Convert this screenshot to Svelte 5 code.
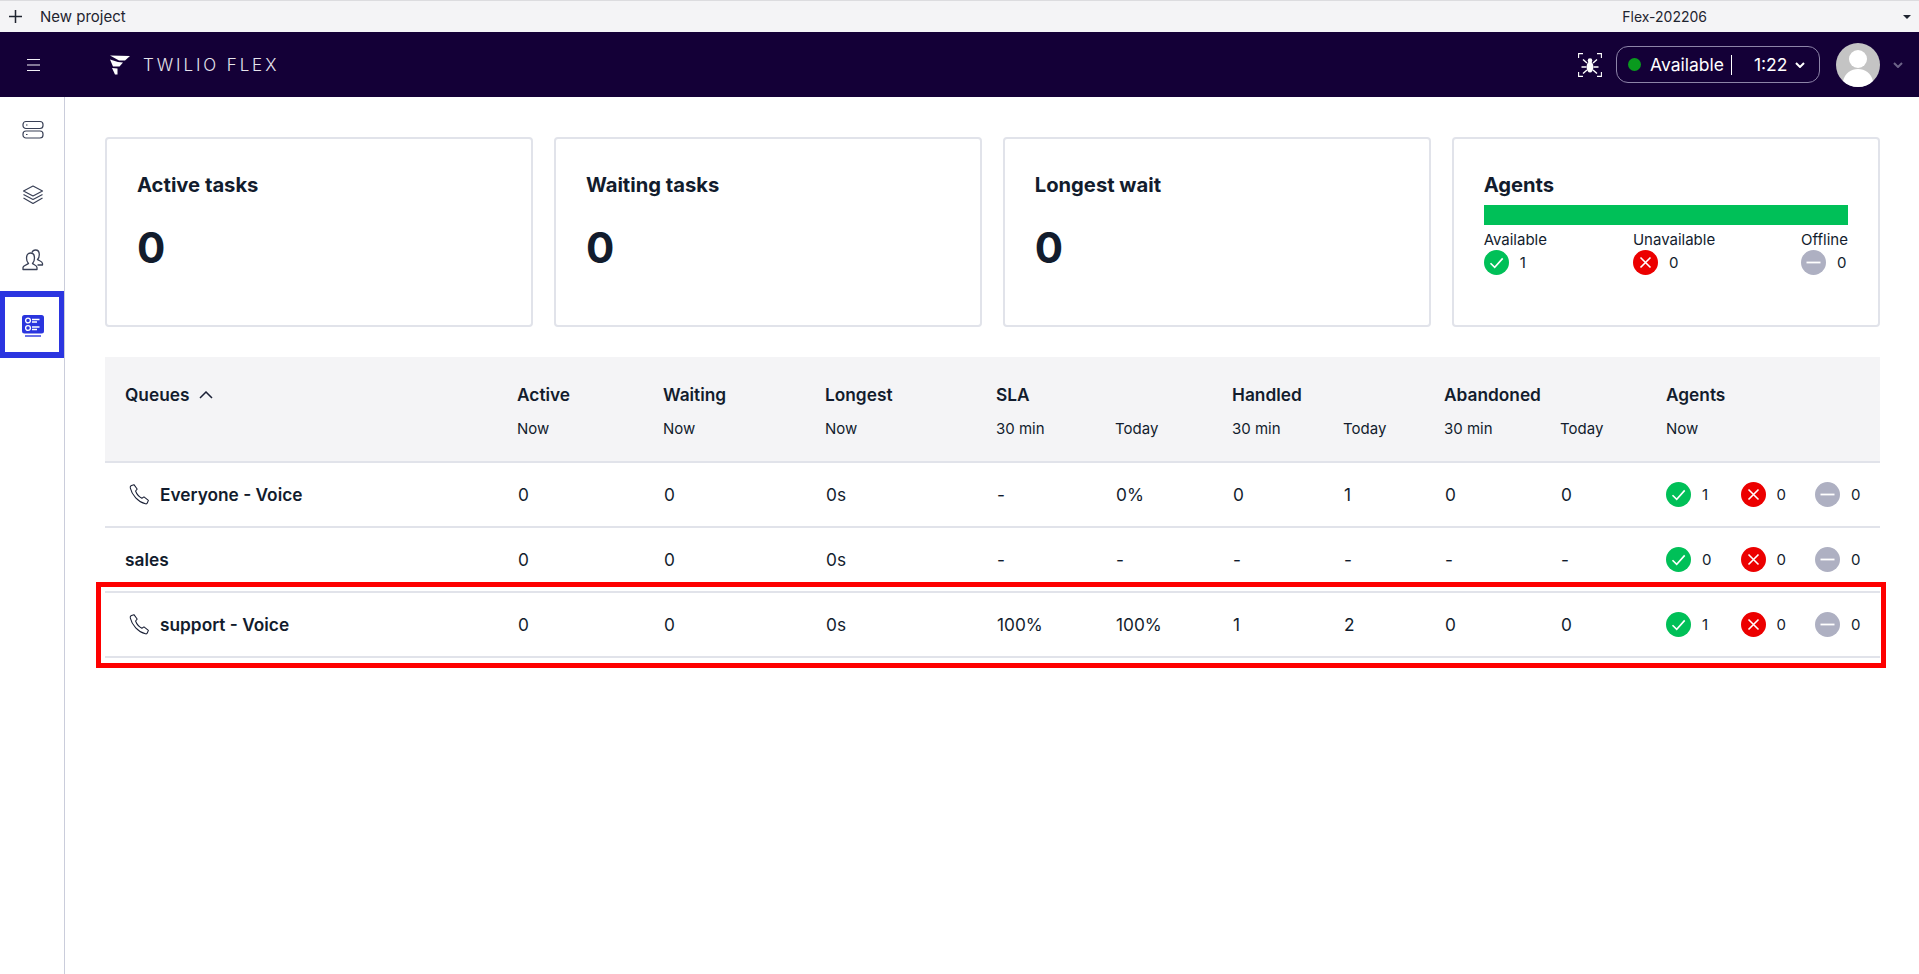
<script>
  const cards = ['Active tasks', 'Waiting tasks', 'Longest wait'];

  const columns = [
    { title: 'Active', sub: 'Now' },
    { title: 'Waiting', sub: 'Now' },
    { title: 'Longest', sub: 'Now' },
    { title: 'SLA', sub: '30 min' },
    { title: '', sub: 'Today' },
    { title: 'Handled', sub: '30 min' },
    { title: '', sub: 'Today' },
    { title: 'Abandoned', sub: '30 min' },
    { title: '', sub: 'Today' },
    { title: 'Agents', sub: 'Now' }
  ];

  const queues = [
    { name: 'Everyone - Voice', voice: true, values: ['0', '0', '0s', '-', '0%', '0', '1', '0', '0'], agents: [1, 0, 0] },
    { name: 'sales', voice: false, values: ['0', '0', '0s', '-', '-', '-', '-', '-', '-'], agents: [0, 0, 0] },
    { name: 'support - Voice', voice: true, values: ['0', '0', '0s', '100%', '100%', '1', '2', '0', '0'], agents: [1, 0, 0] }
  ];
</script>

{#snippet statusIcon(kind)}
  <svg class="status" viewBox="0 0 25 25">
    {#if kind === 'ok'}
      <circle cx="12.5" cy="12.5" r="12.5" fill="#00c058" />
      <path d="M6.5 13.2l4.2 4.2 8-9" fill="none" stroke="#fff" stroke-width="1.6" />
    {:else if kind === 'bad'}
      <circle cx="12.5" cy="12.5" r="12.5" fill="#ec0000" />
      <path d="M7.5 7.5l10 10M17.5 7.5l-10 10" fill="none" stroke="#fff" stroke-width="1.6" />
    {:else}
      <circle cx="12.5" cy="12.5" r="12.5" fill="#aeb0c2" />
      <path d="M5.5 12.5h14" fill="none" stroke="#fff" stroke-width="1.8" />
    {/if}
  </svg>
{/snippet}

{#snippet phone()}
  <svg class="phone" viewBox="0 0 22 22" fill="none" stroke="#1a2036" stroke-width="1.1" stroke-linejoin="round">
    <path d="M2.6 1.6l2.6-.9 3.3 4.6-1.6 2c.9 2.6 3.6 6 6.6 7.6l2.2-1.4 4.6 3.6-1 2.6c-.3.8-1.2 1.3-2 1.1C9.6 18.800 3 11.500 1.300 4c-.2-1 .3-2 1.300-2.400z" />
  </svg>
{/snippet}

<div class="page">
  <div class="tabbar">
    <svg class="plus" viewBox="0 0 12 12"><path d="M6 0v12M0 6h12" stroke="#1f2430" stroke-width="1.400" /></svg>
    <span class="project">New project</span>
    <span class="tab-name">Flex-202206</span>
    <span class="caret"></span>
  </div>

  <header class="topnav">
    <svg class="burger" viewBox="0 0 13 12"><path d="M0 .5h13M0 6h13M0 11.500h13" stroke="#f2f0f6" stroke-width="1" /></svg>
    <svg class="logo" viewBox="0 0 20 20" fill="#fff">
      <path d="M0 .5L20 1L15 5.500L9 5.500Z" />
      <path d="M0 4.500L8 7L13 7.500L9.500 11.500L3 11.500Z" />
      <path d="M2 13L7.500 13.500L7.500 19.500L5 19.500Z" />
    </svg>
    <span class="brand">TWILIO FLEX</span>

    <svg class="bug" viewBox="0 0 24 24" fill="none" stroke="#fff" stroke-width="1.100">
      <path d="M0.600 5V.6H5M19 .6h4.400V5M.6 19v4.400H5M23.400 19v4.400H19" />
      <ellipse cx="12" cy="14" rx="3.400" ry="5.500" fill="#fff" stroke="none" />
      <circle cx="12" cy="7.500" r="2.300" fill="#fff" stroke="none" />
      <path d="M9 10L5 6.500M15 10l4-3.500M8.500 14H3.500M15.500 14h5M9 17l-4 3.500M15 17l4 3.500" stroke-width="1.400" />
    </svg>

    <div class="activity">
      <span class="dot"></span>
      <span class="activity-name">Available</span>
      <span class="divider"></span>
      <span class="timer">1:22</span>
      <svg class="chev" viewBox="0 0 10 6"><path d="M1 1l4 4 4-4" fill="none" stroke="#fff" stroke-width="2" /></svg>
    </div>

    <div class="avatar">
      <svg viewBox="0 0 44 44">
        <circle cx="22" cy="22" r="22" fill="#c4c4c4" />
        <circle cx="22" cy="16" r="9" fill="#fff" />
        <path d="M7 38c2-8 8-12 15-12s13 4 15 12c-4 4-9 6-15 6s-11-2-15-6z" fill="#fff" />
      </svg>
    </div>
    <svg class="avatar-chev" viewBox="0 0 10 6"><path d="M1 1l4 4 4-4" fill="none" stroke="#6d6388" stroke-width="2" /></svg>
  </header>

  <div class="body">
    <aside class="sidebar">
      <div class="side-item">
        <svg viewBox="0 0 22 20" fill="none" stroke="#394056" stroke-width="1.200">
          <rect x="1" y="1.500" width="20" height="7" rx="3" />
          <rect x="1" y="11" width="20" height="7" rx="3" />
          <path d="M4 5h1.500M4 14.500h1.500" />
        </svg>
      </div>
      <div class="side-item">
        <svg viewBox="0 0 22 20" fill="none" stroke="#394056" stroke-width="1.200" stroke-linejoin="round">
          <path d="M11 1l9.500 5-9.500 5-9.500-5z" />
          <path d="M1.500 9.500l9.500 5 9.500-5" />
          <path d="M1.500 13l9.500 5.500 9.500-5.500" />
        </svg>
      </div>
      <div class="side-item">
        <svg viewBox="0 0 22 22" fill="none" stroke="#394056" stroke-width="1.300" stroke-linejoin="round">
          <path d="M1 20.500h14v-2c0-2-3.500-3-4.500-4 1.500-1.500 2-3 2-5.500 0-3-1.500-5-4-5s-4 2-4 5c0 2.500.5 4 2 5.500-1 1-5.500 2-5.500 4z" />
          <path d="M10 3.500C10.500 2 12 1 13.500 1c2.500 0 3.800 2 3.800 4.500 0 2-.5 4-1.800 5 1 1 5 2 5 4v1.500h-5" />
        </svg>
      </div>
      <div class="side-item selected">
        <svg viewBox="0 0 24 24">
          <rect x="1" y="0" width="22" height="18.500" rx="2.500" fill="#2a35de" />
          <circle cx="7" cy="5.500" r="2.400" fill="none" stroke="#fff" stroke-width="1.300" />
          <circle cx="7" cy="13" r="2.400" fill="none" stroke="#fff" stroke-width="1.300" />
          <path d="M11 4.500h7.500M11 7h5M11 12h7.500M11 14.500h5" stroke="#fff" stroke-width="1.300" />
          <path d="M4 21h16" stroke="#2a35de" stroke-width="1.400" />
        </svg>
      </div>
    </aside>

    <main class="content">
      <section class="cards">
        {#each cards as title}
          <div class="card">
            <h2>{title}</h2>
            <div class="big">0</div>
          </div>
        {/each}
        <div class="card agents-card">
          <h2>Agents</h2>
          <div class="bar"></div>
          <div class="legend">
            <div class="legend-item">
              <span>Available</span>
              <div class="legend-value">{@render statusIcon('ok')}<b>1</b></div>
            </div>
            <div class="legend-item">
              <span>Unavailable</span>
              <div class="legend-value">{@render statusIcon('bad')}<b>0</b></div>
            </div>
            <div class="legend-item">
              <span>Offline</span>
              <div class="legend-value">{@render statusIcon('off')}<b>0</b></div>
            </div>
          </div>
        </div>
      </section>

      <section class="table">
        <div class="grid head">
          <div class="cell queues-head">
            <div class="col-title">Queues
              <svg viewBox="0 0 14 8"><path d="M1 7l6-6 6 6" fill="none" stroke="#1a2036" stroke-width="1.500" /></svg>
            </div>
          </div>
          {#each columns as col}
            <div class="cell">
              <div class="col-title">{col.title}</div>
              <div class="col-sub">{col.sub}</div>
            </div>
          {/each}
        </div>

        {#each queues as q}
          <div class="grid row">
            <div class="name" class:voice={q.voice}>
              {#if q.voice}{@render phone()}{/if}
              {q.name}
            </div>
            {#each q.values as v}
              <div class="val">{v}</div>
            {/each}
            <div class="agent-counts">
              <span class="count">{@render statusIcon('ok')}<i>{q.agents[0]}</i></span>
              <span class="count">{@render statusIcon('bad')}<i>{q.agents[1]}</i></span>
              <span class="count">{@render statusIcon('off')}<i>{q.agents[2]}</i></span>
            </div>
          </div>
        {/each}

        <div class="highlight"></div>
      </section>
    </main>
  </div>
</div>

<style>
  :global(body) {
    margin: 0;
    background: #fff;
  }

  .page {
    height: 974px;
    display: flex;
    flex-direction: column;
    overflow: hidden;
    font-family: Inter, "Liberation Sans", sans-serif;
    color: #121c2d;
  }

  .tabbar {
    height: 31px;
    flex: none;
    display: flex;
    align-items: center;
    background: #f4f4f6;
    border-top: 1px solid #dcdcdf;
    font-size: 15px;
    color: #1f2430;
  }

  .plus {
    width: 13px;
    height: 13px;
    margin-left: 9px;
  }

  .project {
    margin-left: 18px;
  }

  .tab-name {
    margin-left: auto;
    margin-right: 196px;
    font-size: 14px;
  }

  .caret {
    width: 0;
    height: 0;
    border-left: 4px solid transparent;
    border-right: 4px solid transparent;
    border-top: 4px solid #1f2430;
    margin-right: 8px;
  }

  .topnav {
    height: 65px;
    flex: none;
    display: flex;
    align-items: center;
    background: #140037;
    color: #fff;
  }

  .burger {
    width: 13px;
    height: 12px;
    margin-left: 27px;
  }

  .logo {
    width: 20px;
    height: 20px;
    margin-left: 70px;
  }

  .brand {
    margin-left: 13px;
    font-size: 17px;
    font-weight: 300;
    letter-spacing: 2.900px;
    color: #e6e4ec;
  }

  .bug {
    width: 24px;
    height: 24px;
    margin-left: auto;
  }

  .activity {
    width: 204px;
    height: 37px;
    box-sizing: border-box;
    margin-left: 14px;
    padding-left: 11px;
    display: flex;
    align-items: center;
    border: 1px solid #8d84a8;
    border-radius: 12px;
    font-size: 17.500px;
  }

  .dot {
    width: 13px;
    height: 13px;
    border-radius: 50%;
    background: #0a9a1e;
  }

  .activity-name {
    margin-left: 9px;
  }

  .divider {
    width: 1px;
    height: 20px;
    margin-left: 7px;
    background: #fff;
  }

  .timer {
    margin-left: 22px;
  }

  .chev {
    width: 10px;
    height: 6px;
    margin-left: 8px;
  }

  .avatar {
    width: 44px;
    height: 44px;
    margin-left: 16px;
  }

  .avatar svg {
    display: block;
  }

  .avatar-chev {
    width: 10px;
    height: 6px;
    margin-left: 13px;
    margin-right: 16px;
  }

  .body {
    flex: 1;
    display: flex;
    min-height: 0;
  }

  .sidebar {
    width: 64px;
    flex: none;
    border-right: 1px solid #cacddb;
  }

  .side-item {
    height: 65px;
    box-sizing: border-box;
    padding-left: 2px;
    display: flex;
    align-items: center;
    justify-content: center;
  }

  .side-item svg {
    width: 22px;
    height: 22px;
  }

  .side-item.selected {
    height: 67px;
    border-style: solid;
    border-color: #2b35e0;
    border-width: 6px 5px;
    margin-top: -1px;
    padding-top: 5px;
  }

  .side-item.selected svg {
    width: 24px;
    height: 24px;
  }

  .content {
    flex: 1;
    min-width: 0;
    padding: 40px 39px 0 40px;
  }

  .cards {
    display: grid;
    grid-template-columns: repeat(4, 1fr);
    gap: 20.500px;
  }

  .card {
    height: 190px;
    box-sizing: border-box;
    padding: 34px 30px 0 30px;
    background: #fff;
    border: 2px solid #e1e3ea;
    border-radius: 4px;
  }

  h2 {
    margin: 0;
    font-size: 20.200px;
    line-height: 24px;
    font-weight: 700;
  }

  .big {
    margin-top: 27px;
    font-size: 42px;
    line-height: 48px;
    font-weight: 700;
  }

  .bar {
    height: 20px;
    margin-top: 8px;
    background: #00c058;
  }

  .legend {
    display: flex;
    justify-content: space-between;
    margin-top: 7px;
  }

  .legend-item span {
    display: block;
    font-size: 15px;
    line-height: 16px;
  }

  .legend-value {
    display: flex;
    align-items: center;
    gap: 11px;
    margin-top: 2px;
  }

  .legend-value b {
    font-size: 15px;
    font-weight: 400;
  }

  .status {
    width: 25px;
    height: 25px;
    flex: none;
    display: block;
  }

  .table {
    position: relative;
    margin-top: 30px;
  }

  .grid {
    display: grid;
    grid-template-columns: 412px 146px 162px 171px 119px 117px 111px 101px 116px 106px 1fr;
    border-bottom: 2px solid #e1e3ea;
  }

  .head {
    height: 106px;
    box-sizing: border-box;
    padding-top: 28px;
    background: #f4f4f6;
  }

  .queues-head {
    padding-left: 20px;
  }

  .col-title {
    height: 20px;
    font-size: 17.300px;
    line-height: 20px;
    font-weight: 600;
    white-space: nowrap;
  }

  .col-title svg {
    width: 14px;
    height: 8px;
    margin-left: 5px;
    vertical-align: 2px;
  }

  .col-sub {
    margin-top: 15px;
    font-size: 15px;
    line-height: 18px;
  }

  .row {
    height: 65px;
    box-sizing: border-box;
    align-items: center;
    font-size: 17.300px;
  }

  .name {
    padding-left: 20px;
    display: flex;
    align-items: center;
    font-weight: 600;
  }

  .phone {
    width: 21px;
    height: 21px;
    margin-left: 4px;
    margin-right: 10px;
  }

  .val {
    padding-left: 1px;
  }

  .agent-counts {
    display: flex;
    font-size: 15px;
  }

  .count {
    width: 74.500px;
    display: flex;
    align-items: center;
    gap: 11px;
  }

  .count i {
    font-style: normal;
  }

  .highlight {
    position: absolute;
    left: -9px;
    right: -6px;
    top: 225px;
    height: 86px;
    box-sizing: border-box;
    border: 5px solid #fe0000;
    pointer-events: none;
  }
</style>
